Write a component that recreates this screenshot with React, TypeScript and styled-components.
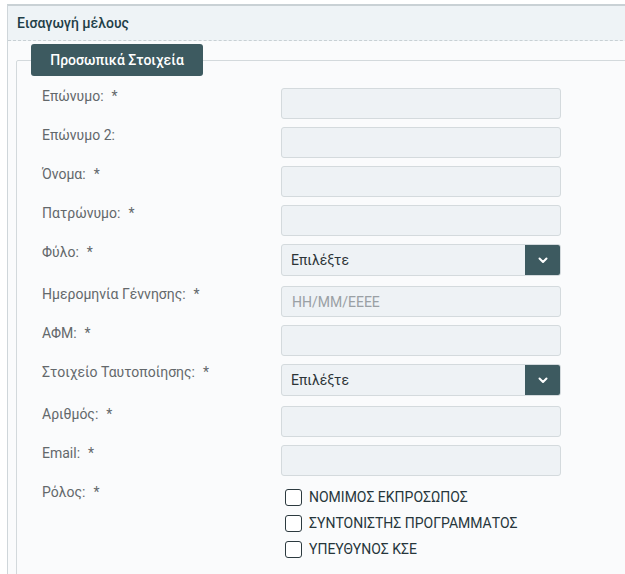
import React from "react";
import styled, { createGlobalStyle } from "styled-components";

const GlobalStyle = createGlobalStyle`
  body {
    margin: 0;
    background: #ffffff;
    font-family: Roboto, "Liberation Sans", sans-serif;
    overflow: hidden;
  }
`

const Panel = styled.div`
  margin: 4px 0 0 7px;
  width: 660px;
  border-left: 1px solid #cfd6da;
  border-top: 2px solid #c9d1d5;
  background: #fafbfc;
  min-height: 600px;
`
const PanelHeader = styled.div`
  height: 34px;
  display: flex;
  align-items: center;
  padding-left: 9px;
  background: #eef3f6;
  border-bottom: 1px dashed #c8d0d4;
  font-size: 14px;
  font-weight: 500;
  color: #1f3f48;
`
const PanelBody = styled.div`
  padding: 3px 0 0 8px;
`
const Fieldset = styled.fieldset`
  margin: 0;
  padding: 12px 0 20px 0;
  border: 1px solid #d3d9dc;
  border-radius: 2px;
`
const Legend = styled.legend`
  margin-left: 14px;
  padding: 0;
  width: 172px;
  height: 32px;
  background: #3d5a60;
  color: #ffffff;
  border-radius: 3px;
  font-size: 14px;
  font-weight: 500;
  display: flex;
  align-items: center;
  justify-content: center;
`
const Rows = styled.div`
  padding-left: 25px;
`
const Row = styled.div`
  display: flex;
  margin-bottom: 8px;
`
const Label = styled.div`
  width: 239px;
  flex-shrink: 0;
  font-size: 14px;
  line-height: 17px;
  color: #63686b;
`
const Star = styled.span`
  margin-left: 8px;
`
const Input = styled.input`
  box-sizing: border-box;
  width: 280px;
  height: 31px;
  margin: 0;
  padding: 0 10px;
  background: #eef2f5;
  border: 1px solid #d4dadd;
  border-radius: 3px;
  font-family: Roboto, "Liberation Sans", sans-serif;
  font-size: 14px;
  color: #333;
  &::placeholder {
    color: #9aa0a4;
  }
`
const Select = styled.div`
  box-sizing: border-box;
  width: 280px;
  height: 32px;
  margin-bottom: 2px;
  display: flex;
  background: #eef2f5;
  border: 1px solid #d4dadd;
  border-radius: 3px;
  overflow: hidden;
`
const SelectText = styled.div`
  flex: 1;
  display: flex;
  align-items: center;
  padding-left: 9px;
  font-size: 14px;
  color: #2c3437;
`
const SelectArrow = styled.div`
  width: 35px;
  background: #3d5a60;
  display: flex;
  align-items: center;
  justify-content: center;
`
const Checks = styled.div`
  display: flex;
  flex-direction: column;
`
const CheckRow = styled.label`
  display: flex;
  align-items: center;
  height: 26px;
  font-size: 14px;
  color: #26363b;
`
const Box = styled.span`
  box-sizing: border-box;
  width: 17px;
  height: 17px;
  margin-left: 4px;
  margin-right: 7px;
  border: 1.5px solid #2c3a3f;
  border-radius: 3px;
  background: #ffffff;
`

type Field = {
  label: string;
  required?: boolean;
  kind?: "input" | "select";
  placeholder?: string;
};

const fields: Field[] = [
  { label: "Επώνυμο:", required: true },
  { label: "Επώνυμο 2:" },
  { label: "Όνομα:", required: true },
  { label: "Πατρώνυμο:", required: true },
  { label: "Φύλο:", required: true, kind: "select" },
  { label: "Ημερομηνία Γέννησης:", required: true, placeholder: "ΗΗ/ΜΜ/ΕΕΕΕ" },
  { label: "ΑΦΜ:", required: true },
  { label: "Στοιχείο Ταυτοποίησης:", required: true, kind: "select" },
  { label: "Αριθμός:", required: true },
  { label: "Email:", required: true },
];

const roles = ["ΝΟΜΙΜΟΣ ΕΚΠΡΟΣΩΠΟΣ", "ΣΥΝΤΟΝΙΣΤΗΣ ΠΡΟΓΡΑΜΜΑΤΟΣ", "ΥΠΕΥΘΥΝΟΣ ΚΣΕ"];

function Chevron() {
  return (
    <svg width="10" height="7" viewBox="0 0 10 7">
      <path d="M1.5 1.5 L5 5 L8.5 1.5" fill="none" stroke="#ffffff" strokeWidth="2" strokeLinecap="round" strokeLinejoin="round" />
    </svg>
  );
}

function App() {
  return (
    <>
      <GlobalStyle />
      <Panel>
        <PanelHeader>Εισαγωγή μέλους</PanelHeader>
        <PanelBody>
          <Fieldset>
            <Legend>Προσωπικά Στοιχεία</Legend>
            <Rows>
              {fields.map((f) => (
                <Row key={f.label}>
                  <Label>
                    {f.label}
                    {f.required && <Star>*</Star>}
                  </Label>
                  {f.kind === "select" ? (
                    <Select>
                      <SelectText>Επιλέξτε</SelectText>
                      <SelectArrow>
                        <Chevron />
                      </SelectArrow>
                    </Select>
                  ) : (
                    <Input placeholder={f.placeholder} />
                  )}
                </Row>
              ))}
              <Row>
                <Label>
                  Ρόλος:<Star>*</Star>
                </Label>
                <Checks>
                  {roles.map((r) => (
                    <CheckRow key={r}>
                      <Box />
                      {r}
                    </CheckRow>
                  ))}
                </Checks>
              </Row>
            </Rows>
          </Fieldset>
        </PanelBody>
      </Panel>
    </>
  );
}

export default App;
